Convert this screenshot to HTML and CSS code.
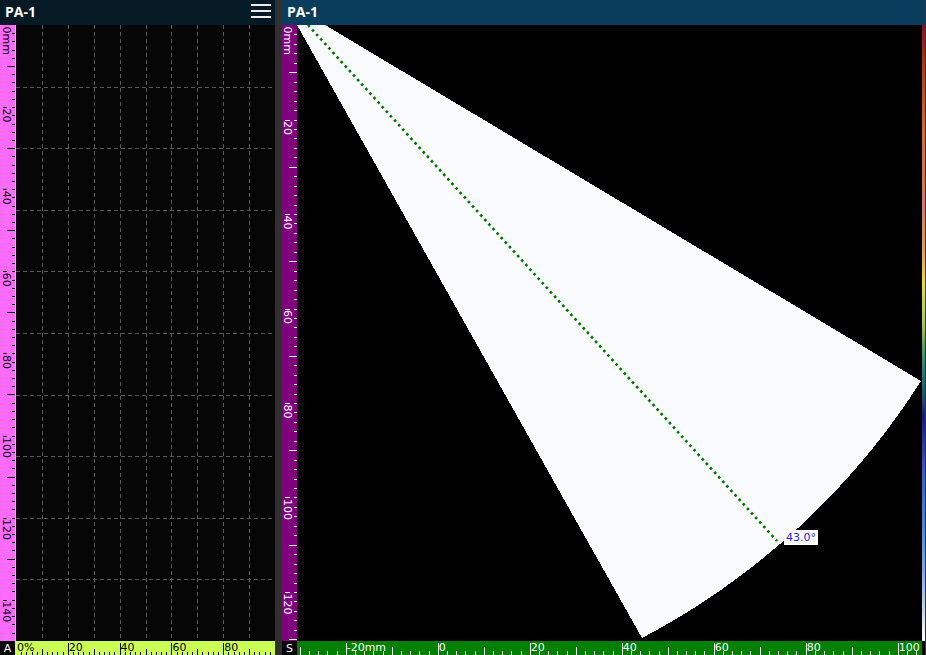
FILE: index.html
```html
<!DOCTYPE html>
<html lang="en">
    <head>
        <meta charset="UTF-8" />
        <meta name="viewport" content="width=device-width, initial-scale=1.0" />
        <title>PA-1 Views</title>
        <link rel="stylesheet" href="styles.css">
    </head>
    <body>
        <div class="screen">
            <section class="view aView">
                <header class="viewHead">
                    <span class="viewTitle">PA-1</span>
                    <span class="menu"><i></i><i></i><i></i></span>
                </header>
                <div class="viewBody">
                    <div class="ruler rulerDepth">
                        <svg id="aDepth" width="15" height="616"></svg>
                    </div>
                    <div class="plot">
                        <svg id="aGrid" class="grid" width="259" height="616"></svg>
                    </div>
                </div>
                <div class="viewFoot">
                    <div class="corner">A</div>
                    <svg id="aAmp" class="axis axisAmp" width="260" height="14"></svg>
                </div>
            </section>
            <div class="split"></div>
            <section class="view sView">
                <header class="viewHead">
                    <span class="viewTitle">PA-1</span>
                </header>
                <div class="viewBody">
                    <div class="ruler rulerPath">
                        <svg id="sDepth" width="15" height="616"></svg>
                    </div>
                    <div class="plot">
                        <svg class="sector" width="625" height="616" viewBox="0 0 625 616">
                            <path class="beam" d="M0 0 L345 613 A738 738 0 0 0 624 356 L28 0 Z" />
                            <line class="cursor" x1="11" y1="0" x2="480" y2="516" />
                        </svg>
                        <div class="angleTag">43.0°</div>
                    </div>
                    <div class="colorBar"></div>
                </div>
                <div class="viewFoot">
                    <div class="corner">S</div>
                    <svg id="sIndex" class="axis axisIndex" width="625" height="14"></svg>
                    <div class="footPad"></div>
                </div>
            </section>
        </div>
        <script>
            const NS = "http://www.w3.org/2000/svg";

            function add(svg, tag, attrs, text) {
                let node = document.createElementNS(NS, tag);
                for (let k in attrs) node.setAttribute(k, attrs[k]);
                if (text !== undefined) node.textContent = text;
                svg.appendChild(node);
                return node;
            }

            // keep 1px lines on whole pixels
            function crisp(p) {
                return Math.round(p) + 0.5;
            }

            function depthRuler(id, scale, lineX, textX) {
                let svg = document.getElementById(id);
                for (let v = 0; v * scale < 616; v += 2) {
                    let y = v * scale;
                    let py = crisp(y);
                    if (v % 20 == 0) {
                        if (v > 0) {
                            add(svg, "line", { x1: lineX[0], y1: py, x2: lineX[1], y2: py });
                        }
                        add(svg, "text", {
                            transform: "translate(" + textX + " " + (y + 1.5) + ") rotate(90)"
                        }, v == 0 ? "0mm" : String(v));
                    }
                    if (v == 0) continue;
                    let len = v % 10 == 0 && v % 20 != 0 ? 8 : 3;
                    add(svg, "line", { x1: 15 - len, y1: py, x2: 15, y2: py });
                }
            }

            function indexAxis(id, origin, scale, from, to, label, small, long) {
                let svg = document.getElementById(id);
                for (let v = from; v <= to; v += 2) {
                    let x = origin + v * scale;
                    let px = crisp(x);
                    let text = label(v);
                    if (text) {
                        if (v != 0 || text != "0%") {
                            add(svg, "line", { x1: px, y1: 2, x2: px, y2: 14 });
                        }
                        add(svg, "text", { x: x + 1, y: 9.5 }, text);
                    } else {
                        let len = v % 10 == 0 ? long : small;
                        add(svg, "line", { x1: px, y1: 14 - len, x2: px, y2: 14 });
                    }
                }
            }

            function grid() {
                let svg = document.getElementById("aGrid");
                for (let k = 1; k < 10; k++) {
                    let x = crisp(k * 25.9);
                    add(svg, "line", { x1: x, y1: 0, x2: x, y2: 616 });
                    let y = crisp(k * 61.6);
                    add(svg, "line", { x1: 0, y1: y, x2: 259, y2: y });
                }
            }

            function main() {
                grid();
                depthRuler("aDepth", 4.105, [3, 7], 3);
                depthRuler("sDepth", 4.725, [3, 8], 1.5);
                indexAxis("aAmp", 1, 2.59, 0, 98, (v) => {
                    if (v % 20 != 0) return null;
                    return v == 0 ? "0%" : String(v);
                }, 3, 6);
                indexAxis("sIndex", 140.7, 4.6, -30, 104, (v) => {
                    if (v % 20 != 0) return null;
                    return v == -20 ? "-20mm" : String(v);
                }, 4, 8);
            }

            main();
        </script>
    </body>
</html>
```

FILE: styles.css
```css
* {
    box-sizing: border-box;
}
body {
    margin: 0;
    background-color: #333333;
    font-family: "DejaVu Sans", sans-serif;
}
svg {
    display: block;
}
.screen {
    display: flex;
    width: 926px;
    height: 655px;
    overflow: hidden;
}
.view {
    display: flex;
    flex-direction: column;
}
.aView {
    width: 275px;
}
.sView {
    width: 643px;
}
.split {
    width: 7px;
    background-color: #303030;
}
.viewHead {
    height: 25px;
    display: flex;
    justify-content: space-between;
    align-items: flex-start;
    padding: 0 4px 0 5px;
    color: #ffffff;
}
.aView .viewHead {
    background-color: #051a24;
}
.sView .viewHead {
    background-color: #0a3d5c;
}
.viewTitle {
    font: bold 14px/24px "Open Sans", sans-serif;
}
.menu {
    display: flex;
    flex-direction: column;
    gap: 4px;
    width: 20px;
    margin-top: 4px;
}
.menu i {
    display: block;
    height: 2px;
    background-color: #ececec;
}
.viewBody {
    display: flex;
    height: 616px;
}
.ruler {
    flex: none;
}
.ruler text,
.axis text {
    font-size: 11px;
    font-family: "DejaVu Sans", sans-serif;
}
.ruler line,
.axis line {
    stroke-width: 1;
}
.rulerDepth {
    width: 16px;
    background-color: #ff6bff;
    border-right: 1px solid #f2e600;
}
.rulerDepth line {
    stroke: #000000;
}
.rulerDepth text {
    fill: #000000;
}
.rulerPath {
    width: 15px;
    background-color: #800080;
}
.rulerPath line {
    stroke: #ffffff;
}
.rulerPath text {
    fill: #ffffff;
}
.plot {
    position: relative;
    flex: 1;
    overflow: hidden;
}
.aView .plot {
    background-color: #060606;
}
.sView .plot {
    background-color: #000000;
}
.grid line {
    stroke: #555555;
    stroke-width: 1;
    stroke-dasharray: 4 3;
}
.beam {
    fill: #f9fbfd;
    shape-rendering: crispEdges;
}
.cursor {
    stroke: #007400;
    stroke-width: 2.6;
    stroke-dasharray: 2.6 3.5;
}
.angleTag {
    position: absolute;
    left: 487px;
    top: 505px;
    height: 15px;
    padding: 0 2px;
    background-color: #ffffff;
    color: #1c1ce6;
    font-size: 11px;
    line-height: 15px;
}
.colorBar {
    width: 3px;
    background: linear-gradient(to bottom,
        #8b1020 0%,
        #b03a20 6.8%,
        #c05a20 12.2%,
        #d07030 17.5%,
        #d07a70 29.2%,
        #e0a050 36.5%,
        #f0e020 41.9%,
        #a8c848 48.7%,
        #60a060 51.9%,
        #2a7a7a 56%,
        #204a70 60.9%,
        #101a80 63.6%,
        #3a5ac8 72.2%,
        #5080d8 80.4%,
        #80a8e8 88.5%,
        #c0d8f0 95%,
        #ffffff 100%);
}
.viewFoot {
    display: flex;
    height: 14px;
}
.corner {
    width: 15px;
    flex: none;
    background-color: #000000;
    color: #ffffff;
    font-size: 11px;
    line-height: 16px;
    text-align: center;
    overflow: hidden;
}
.axisAmp {
    background-color: #ccff55;
}
.axisAmp line {
    stroke: #000000;
}
.axisAmp text {
    fill: #000000;
}
.axisIndex {
    background-color: #008000;
}
.axisIndex line {
    stroke: #ffffff;
}
.axisIndex text {
    fill: #ffffff;
}
.footPad {
    width: 3px;
    background-color: #000000;
}
```
